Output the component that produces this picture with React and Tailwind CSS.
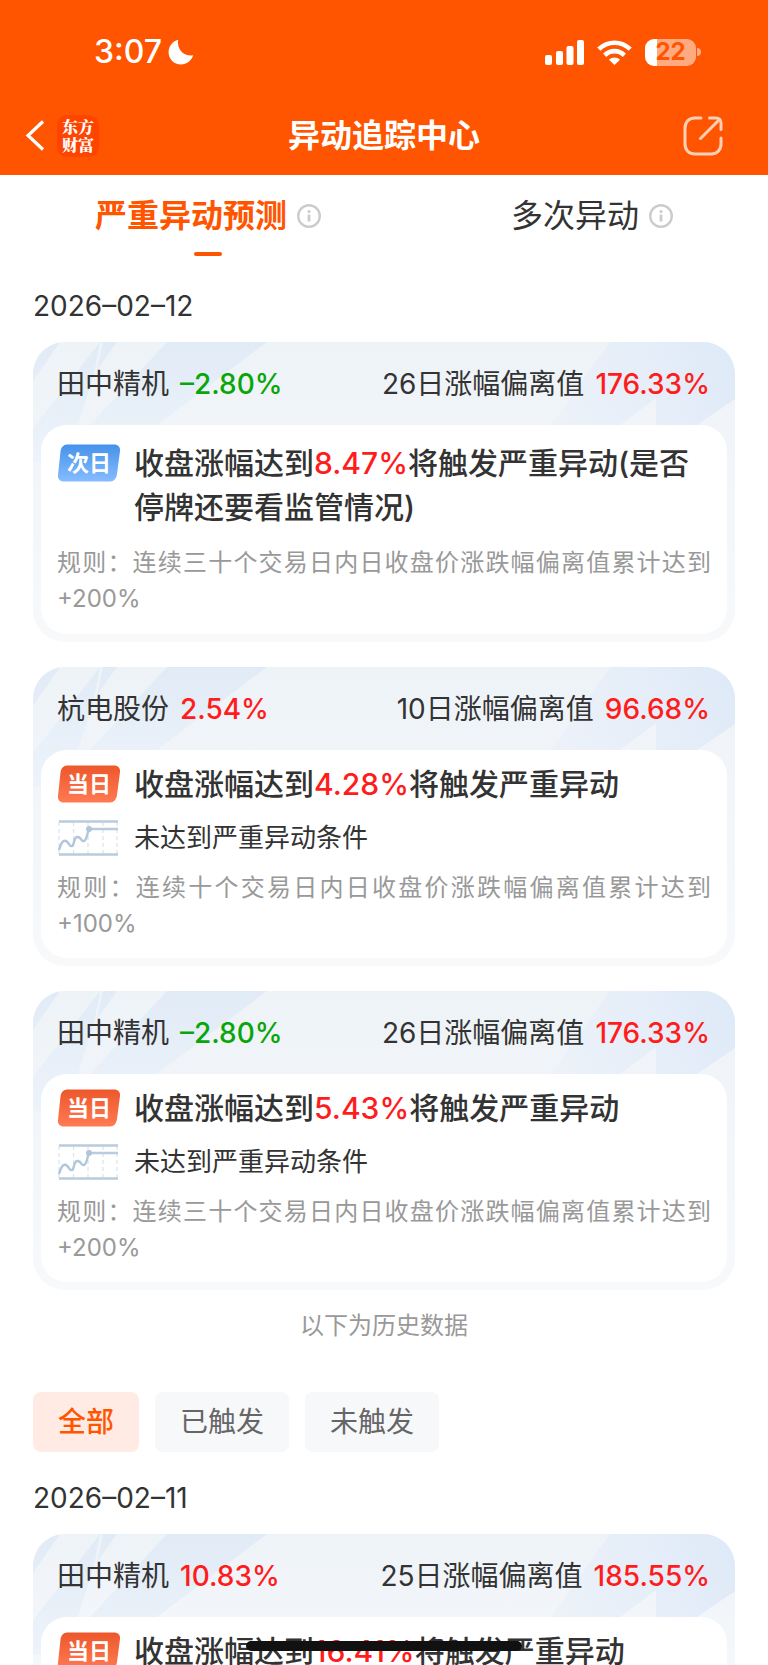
import React, { useState } from 'react';

const NOT_REACHED = '未达到严重异动条件';

const UPCOMING = [
  {
    name: '田中精机',
    change: '–2.80%',
    down: true,
    days: 26,
    deviation: '176.33%',
    when: 'next',
    target: '8.47%',
    tail: '将触发严重异动(是否停牌还要看监管情况)',
    rule: '规则：连续三十个交易日内日收盘价涨跌幅偏离值累计达到+200%',
  },
  {
    name: '杭电股份',
    change: '2.54%',
    days: 10,
    deviation: '96.68%',
    when: 'today',
    target: '4.28%',
    tail: '将触发严重异动',
    status: NOT_REACHED,
    rule: '规则：连续十个交易日内日收盘价涨跌幅偏离值累计达到+100%',
  },
  {
    name: '田中精机',
    change: '–2.80%',
    down: true,
    days: 26,
    deviation: '176.33%',
    when: 'today',
    target: '5.43%',
    tail: '将触发严重异动',
    status: NOT_REACHED,
    rule: '规则：连续三十个交易日内日收盘价涨跌幅偏离值累计达到+200%',
  },
];

const HISTORY = [
  {
    name: '田中精机',
    change: '10.83%',
    days: 25,
    deviation: '185.55%',
    when: 'today',
    target: '16.41%',
    tail: '将触发严重异动',
  },
];

const FILTERS = ['全部', '已触发', '未触发'];

function StatusBar() {
  return (
    <div className="flex h-24 items-center justify-between pt-2 pr-[67px] pl-[94px]">
      <div className="flex items-center gap-1.5">
        <span className="text-[32px] leading-10 font-medium">3:07</span>
        <svg className="size-[26px]" viewBox="0 0 26 26" fill="currentColor">
          <path d="M10.2 0.8C8.6 8.8 14.6 18.2 25.2 16.2C23.4 21.8 18.6 25.4 13 25.4C6 25.4 0.6 20 0.6 13.2C0.6 7.4 4.4 2.4 10.2 0.8Z" />
        </svg>
      </div>
      <div className="flex items-center">
        <svg className="h-[25px] w-[39px]" viewBox="0 0 39 25" fill="currentColor">
          <rect x="0" y="15" width="7" height="10" rx="2" />
          <rect x="11" y="11" width="7" height="14" rx="2" />
          <rect x="21.500" y="6" width="7" height="19" rx="2" />
          <rect x="32" y="0" width="7" height="25" rx="2" />
        </svg>
        <svg className="ml-[13px] h-[25px] w-[35px]" viewBox="0 0 35 25" fill="none" stroke="currentColor">
          <path d="M1.800 9.200C10.800 0.600 24.200 0.600 33.200 9.200" strokeWidth="4.600" />
          <path d="M7.600 15.200C13.400 9.800 21.600 9.800 27.400 15.200" strokeWidth="4.600" />
          <path d="M12 19.800C15.200 16.600 19.800 16.600 23 19.800L17.500 25Z" fill="currentColor" stroke="none" />
        </svg>
        <div className="ml-[13px] flex items-center gap-px">
          <div className="flex h-[27px] w-[51px] items-center justify-center rounded-[9px] bg-[linear-gradient(90deg,#fff_12px,#ffaa80_12px)] text-2xl leading-none font-bold text-[#ff5500]">
            22
          </div>
          <div className="h-2 w-1 rounded-r-full bg-[#ffaa80]" />
        </div>
      </div>
    </div>
  );
}

function TitleBar() {
  return (
    <div className="grid h-[79px] grid-cols-[1fr_auto_1fr] items-center px-[25px]">
      <div className="flex items-center gap-3">
        <button aria-label="返回">
          <svg className="h-[31px] w-5" viewBox="0 0 20 31" fill="none" stroke="currentColor" strokeWidth="3.200">
            <path d="M18 1.500L3 15.500L18 29.500" />
          </svg>
        </button>
        <div className="flex size-[42px] items-center justify-center rounded-[10px] bg-[#ff4400] text-center font-['Noto_Serif_CJK_SC','Noto_Sans_CJK_SC',serif] text-base leading-[18px] font-black">
          东方
          <br />
          财富
        </div>
      </div>
      <h1 className="text-[32px] leading-10 font-semibold">异动追踪中心</h1>
      <button aria-label="分享" className="mr-5 justify-self-end">
        <svg className="size-10 text-[#ffd0b8]" viewBox="0 0 40 40" fill="none" stroke="currentColor" strokeWidth="3" strokeLinecap="round">
          <path d="M18 2H12C6 2 2 6 2 12V28C2 34 6 38 12 38H28C34 38 38 34 38 28V22" />
          <path d="M26.500 2H33C36 2 38 4 38 7V13.500" />
          <path d="M17.500 22.500L36.500 3.500" />
        </svg>
      </button>
    </div>
  );
}

function InfoIcon() {
  return (
    <svg className="size-6" viewBox="0 0 24 24" fill="none">
      <circle cx="12" cy="12" r="10.800" stroke="#ccc" strokeWidth="2.400" />
      <circle cx="12" cy="7.500" r="1.600" fill="#ccc" />
      <path d="M12 10.500V17.500" stroke="#ccc" strokeWidth="2.800" />
    </svg>
  );
}

function Tab({ label, active, onClick }) {
  return (
    <button role="tab" aria-selected={active} onClick={onClick} className="flex flex-col items-center gap-4 pl-8">
      <span className="flex items-center gap-[10px]">
        <span className={`text-[32px] leading-10 ${active ? 'font-semibold text-[#ff5500]' : 'text-[#333]'}`}>
          {label}
        </span>
        <InfoIcon />
      </span>
      <span className={`h-1 w-7 rounded-full ${active ? 'bg-[#ff5500]' : ''}`} />
    </button>
  );
}

function CardBackdrop() {
  return (
    <svg className="absolute inset-x-0 top-0 h-[120px] w-full" viewBox="0 0 702 120" preserveAspectRatio="none">
      <defs>
        <linearGradient id="beam" gradientUnits="userSpaceOnUse" x1="0" y1="0" x2="0" y2="120">
          <stop offset="0" stopColor="#e1ebf6" />
          <stop offset="1" stopColor="#edf3fa" />
        </linearGradient>
        <linearGradient id="beam-right" gradientUnits="userSpaceOnUse" x1="690" y1="0" x2="530" y2="90">
          <stop offset="0" stopColor="#dfeaf8" />
          <stop offset="1" stopColor="#edf2f9" />
        </linearGradient>
      </defs>
      <g fill="url(#beam)">
        <path d="M0 0H27L0 39Z" />
        <path d="M67 0L61 32L45 83L34 120H0V86Z" />
        <path d="M70 0H84L64 28Z" />
        <path d="M134 0H234L124 83H57Z" />
      </g>
      <path d="M577 0H702V57L664 83H623V56L587 83H518Z" fill="url(#beam-right)" />
    </svg>
  );
}

function DayBadge({ when }) {
  const today = when === 'today';
  return (
    <svg className="h-[38px] w-16 shrink-0" viewBox="0 0 64 38">
      <defs>
        <linearGradient id={`badge-${when}`} x1="0" y1="0" x2="0" y2="1">
          <stop offset="0" stopColor={today ? '#ed572c' : '#4592ea'} />
          <stop offset="1" stopColor={today ? '#ff7a52' : '#85bcff'} />
        </linearGradient>
      </defs>
      <path
        d="M10 0.500H57C61 0.500 63.500 3 63 7L60 30C59.400 34.500 57 37.500 53 37.500H7C3 37.500 0.500 35 1 31L3.500 7.500C4 3.500 6.500 0.500 10 0.500Z"
        fill={`url(#badge-${when})`}
      />
      <text x="32" y="27" textAnchor="middle" fill="#fff" fontSize="22" fontWeight="700">
        {today ? '当日' : '次日'}
      </text>
    </svg>
  );
}

function TrendIcon() {
  return (
    <svg className="h-9 w-16 shrink-0" viewBox="0 0 64 36" fill="none">
      <path d="M2 2V34M16.500 2V34M31 2V34M46 2V34M60 2V34" stroke="#dbe3ee" strokeWidth="1.200" strokeDasharray="4 3" />
      <path d="M2 1.500H61M2 34.500H61M32 9H61" stroke="#b9cbdc" strokeWidth="2.400" />
      <path d="M2 30C4 23 6 20 9 21C12 22 12 27 15 26C18 25 16 16 21 17C25 18 24 22 27 21C30 20 30 14 32 9" stroke="#b1c6da" strokeWidth="2.400" />
      <circle cx="32" cy="9" r="3" fill="#b1c6da" />
    </svg>
  );
}

function StockCard({ item }) {
  return (
    <article className="relative overflow-hidden rounded-[32px] bg-linear-to-b from-[#eef3f8] to-[#f7f9fb] px-2 pb-2">
      <CardBackdrop />
      <div className="relative flex h-[83px] items-center justify-between pr-[17px] pl-4 text-[28px] leading-10 text-[#333]">
        <div className="flex gap-[11px]">
          <span>{item.name}</span>
          <span className={`font-medium ${item.down ? 'text-[#09a609]' : 'text-[#ff1c1c]'}`}>{item.change}</span>
        </div>
        <div className="flex gap-[11px]">
          <span>{item.days}日涨幅偏离值</span>
          <span className="font-medium text-[#ff1c1c]">{item.deviation}</span>
        </div>
      </div>
      <div className={`relative rounded-[26px] bg-white px-4 ${item.status || !item.rule ? 'pt-3 pb-4' : 'pt-4 pb-[17px]'}`}>
        <div className="flex items-start gap-[13px]">
          <div className="flex h-11 items-center">
            <DayBadge when={item.when} />
          </div>
          <p className="text-[30px] leading-11 font-medium text-[#333]">
            收盘涨幅达到<span className="text-[#ff1c1c]">{item.target}</span>
            {item.tail}
          </p>
        </div>
        {item.status && (
          <div className="mt-3 flex items-center gap-[13px]">
            <TrendIcon />
            <p className="text-[26px] leading-10 text-[#333]">{item.status}</p>
          </div>
        )}
        {item.rule && (
          <p className={`text-justify text-2xl leading-9 text-[#999] ${item.status ? 'mt-3' : 'mt-4'}`}>{item.rule}</p>
        )}
      </div>
    </article>
  );
}

function App() {
  const [tab, setTab] = useState(0);
  const [filter, setFilter] = useState('全部');

  return (
    <div className="relative flex h-screen flex-col overflow-hidden bg-white font-['Inter','Noto_Sans_CJK_SC',sans-serif]">
      <header className="shrink-0 bg-[#ff5500] text-white">
        <StatusBar />
        <TitleBar />
      </header>

      <main className="min-h-0 flex-1 overflow-y-auto [scrollbar-width:none]">
        <div role="tablist" className="grid grid-cols-2 pt-[21px]">
          <Tab label="严重异动预测" active={tab === 0} onClick={() => setTab(0)} />
          <Tab label="多次异动" active={tab === 1} onClick={() => setTab(1)} />
        </div>

        <div className="px-[33px]">
          <h2 className="mt-[30px] text-[28px] leading-10 text-[#333]">2026–02–12</h2>
          <div className="mt-4 flex flex-col gap-[25px]">
            {UPCOMING.map((item, index) => (
              <StockCard key={index} item={item} />
            ))}
          </div>

          <p className="mt-4 text-center text-2xl leading-10 text-[#999]">以下为历史数据</p>

          <div className="mt-[46px] flex gap-4">
            {FILTERS.map((name) => (
              <button
                key={name}
                onClick={() => setFilter(name)}
                className={`h-[60px] rounded-lg px-[25px] text-[28px] leading-10 ${
                  filter === name ? 'bg-[#ffebe3] font-medium text-[#ff5500]' : 'bg-[#f7f8fa] text-[#666]'
                }`}
              >
                {name}
              </button>
            ))}
          </div>

          <h2 className="mt-[26px] text-[28px] leading-10 text-[#333]">2026–02–11</h2>
          <div className="mt-4 flex flex-col gap-[25px]">
            {HISTORY.map((item, index) => (
              <StockCard key={index} item={item} />
            ))}
          </div>
        </div>
      </main>

      {/* Home indicator */}
      <div className="pointer-events-none absolute inset-x-0 bottom-[14px] flex justify-center">
        <div className="h-[10px] w-9/25 rounded-full bg-[#111]" />
      </div>
    </div>
  );
}

export default App;
